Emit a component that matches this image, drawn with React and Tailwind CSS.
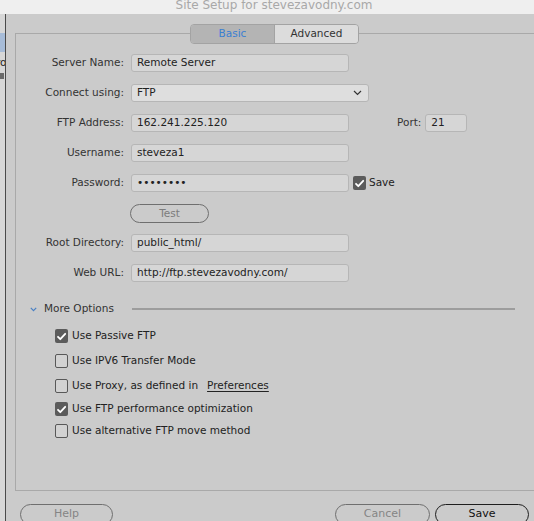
import React from 'react';

const font = "font-['DejaVu_Sans',sans-serif]";

const Field = ({ label, children, className = '' }) => (
  <div className={`flex items-center h-[18px] ${className}`}>
    <div className="w-[108px] text-right text-[10.5px] text-[#333] pr-[0px]">{label}</div>
    <div className="ml-[7px] flex items-center h-full">{children}</div>
  </div>
);

const TextBox = ({ value, width = 'w-[218px]' }) => (
  <div className={`${width} h-[18px] bg-[#d6d6d6] border border-[#b6b6b6] rounded-[3px] px-[5px] flex items-center text-[10.5px] text-[#222] whitespace-nowrap overflow-hidden`}>
    {value}
  </div>
);

const Check = ({ checked }) =>
  checked ? (
    <div className="w-[13px] h-[14px] rounded-[2px] bg-[#5b5b5b] flex items-center justify-center">
      <svg width="11" height="11" viewBox="0 0 11 11">
        <path d="M2 5.8l2.3 2.4L9.2 2.8" fill="none" stroke="#fff" strokeWidth="1.8" strokeLinecap="round" strokeLinejoin="round" />
      </svg>
    </div>
  ) : (
    <div className="w-[13px] h-[14px] rounded-[2px] border-[1.5px] border-[#585858] bg-[#d2d2d2]" />
  );

const Option = ({ checked, children, className = '' }) => (
  <div className={`flex items-center h-[14px] pl-[39px] ${className}`}>
    <Check checked={checked} />
    <span className="ml-[4px] text-[10.5px] text-[#222] whitespace-nowrap">{children}</span>
  </div>
);

export default function App() {
  return (
    <div className={`w-[534px] h-[521px] overflow-hidden bg-[#cbcbcb] flex flex-col ${font}`}>
      {/* Title bar */}
      <div className="h-[14px] shrink-0 bg-[#efefef] overflow-hidden flex justify-center">
        <div className="-mt-[1px] ml-[14px] text-[12px] leading-[12px] text-[#a8a8a8] whitespace-nowrap">
          Site Setup for stevezavodny.com
        </div>
      </div>

      <div className="flex flex-1 min-h-0">
        {/* Sidebar edge */}
        <div className="w-[6px] shrink-0 bg-[#d7d7d7] border-r border-[#4a4a4a] overflow-hidden flex flex-col">
          <div className="mt-[19px] h-[19px] bg-[#a7bcd8]" />
          <div className="mt-[3px] -ml-[4px] text-[10.5px] leading-[14px] text-[#222] whitespace-nowrap">ro</div>
          <div className="mt-[4px] w-[4px] h-[6px] bg-[#6a6a6a]" />
        </div>

        {/* Main */}
        <div className="flex-1 min-w-0 flex flex-col">
          <div className="ml-[9px] flex flex-col">
            {/* Tabs */}
            <div className="relative z-10 mt-[10px] ml-[175px] flex w-[169px] h-[20px] border border-[#a3a3a3] rounded-[4px] overflow-hidden text-[10.5px]">
              <div className="w-[84px] bg-[#b4b4b4] border-r border-[#a3a3a3] flex items-center justify-center text-[#3b7fd2]">Basic</div>
              <div className="flex-1 bg-[#dcdcdc] flex items-center justify-center text-[#333]">Advanced</div>
            </div>

            {/* Group box */}
            <div className="-mt-[11px] w-[530px] h-[458px] border border-[#a9a9a9] pt-[20px] flex flex-col">
              <Field label="Server Name:">
                <TextBox value="Remote Server" />
              </Field>

              <Field label="Connect using:" className="mt-[12px]">
                <div className="w-[238px] h-[18px] bg-[#dedede] border border-[#b6b6b6] rounded-[3px] pl-[5px] pr-[6px] flex items-center justify-between text-[10.5px] text-[#222]">
                  <span>FTP</span>
                  <svg width="9" height="6" viewBox="0 0 9 6">
                    <path d="M1 1l3.5 3.5L8 1" fill="none" stroke="#333" strokeWidth="1.2" />
                  </svg>
                </div>
              </Field>

              <Field label="FTP Address:" className="mt-[12px]">
                <TextBox value="162.241.225.120" />
                <span className="ml-[48px] text-[10.5px] text-[#333]">Port:</span>
                <div className="ml-[4px]">
                  <TextBox value="21" width="w-[42px]" />
                </div>
              </Field>

              <Field label="Username:" className="mt-[12px]">
                <TextBox value="steveza1" />
              </Field>

              <Field label="Password:" className="mt-[12px]">
                <TextBox value="••••••••" />
                <div className="ml-[4px]">
                  <Check checked />
                </div>
                <span className="ml-[3px] text-[10.5px] text-[#222]">Save</span>
              </Field>

              <div className="mt-[12px] ml-[114px] w-[79px] h-[19px] rounded-full border-[1.5px] border-[#6f6f6f] flex items-center justify-center text-[10.5px] text-[#7c7c7c]">
                Test
              </div>

              <Field label="Root Directory:" className="mt-[11px]">
                <TextBox value="public_html/" />
              </Field>

              <Field label="Web URL:" className="mt-[12px]">
                <TextBox value="http://ftp.stevezavodny.com/" />
              </Field>

              {/* More Options */}
              <div className="mt-[20px] h-[14px] flex items-center pl-[14px] pr-[29px]">
                <svg width="7" height="5" viewBox="0 0 7 5">
                  <path d="M0.8 0.8l2.7 2.8L6.2 0.8" fill="none" stroke="#4a80c4" strokeWidth="1.2" />
                </svg>
                <span className="ml-[7px] text-[10.5px] text-[#333] whitespace-nowrap">More Options</span>
                <div className="ml-[18px] flex-1 h-[2px] bg-[#9d9d9d]" />
              </div>

              <Option checked className="mt-[13px]">Use Passive FTP</Option>
              <Option className="mt-[11px]">Use IPV6 Transfer Mode</Option>
              <Option className="mt-[11px]">
                Use Proxy, as defined in
                <span className="ml-[9px] underline underline-offset-2">Preferences</span>
              </Option>
              <Option checked className="mt-[9px]">Use FTP performance optimization</Option>
              <Option className="mt-[8px]">Use alternative FTP move method</Option>
            </div>
          </div>

          {/* Buttons */}
          <div className="mt-[13px] flex items-start pl-[14px] text-[11px]">
            <div className="w-[93px] h-[21px] rounded-full border border-[#6f6f6f] flex items-center justify-center text-[#858585]">Help</div>
            <div className="ml-[222px] w-[95px] h-[21px] rounded-full border border-[#6f6f6f] flex items-center justify-center text-[#858585]">Cancel</div>
            <div className="ml-[5px] w-[94px] h-[21px] rounded-full border-[1.5px] border-[#1e1e1e] flex items-center justify-center text-[#111]">Save</div>
          </div>
        </div>
      </div>
    </div>
  );
}
